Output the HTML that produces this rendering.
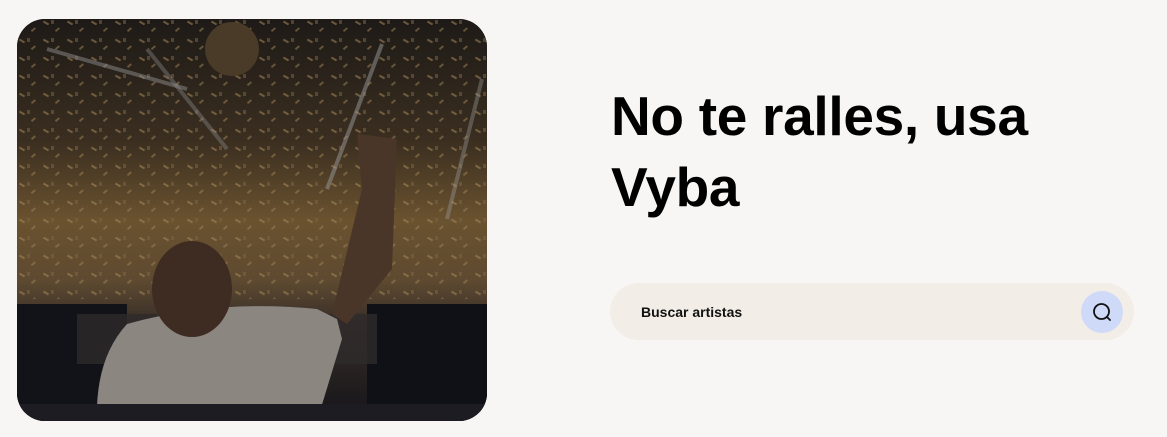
<!DOCTYPE html>
<html><head><meta charset="utf-8"><style>
body{margin:0;width:1167px;height:437px;background:#f7f6f4;position:relative;overflow:hidden;font-family:"Liberation Sans",sans-serif}
.img{position:absolute;left:17px;top:19px;width:470px;height:402px;border-radius:28px;overflow:hidden;background:#1b1713}
h1{position:absolute;left:611px;top:81px;margin:0;font-size:55px;line-height:71px;font-weight:700;color:#000;letter-spacing:-0.3px}
.bar{position:absolute;left:610px;top:283px;width:524px;height:57px;border-radius:29px;background:#f2ede6}
.bar span{position:absolute;left:31px;top:21px;font-size:14px;font-weight:700;color:#111}
.btn{position:absolute;left:471px;top:8px;width:42px;height:42px;border-radius:50%;background:#cfdaf9}
</style></head><body>
<div class="img">
<svg width="470" height="402" viewBox="0 0 470 402">
<defs>
<linearGradient id="v" x1="0" y1="0" x2="0" y2="1">
<stop offset="0" stop-color="#1e1a17"/><stop offset="0.3" stop-color="#3a2e20"/><stop offset="0.5" stop-color="#6a522f"/><stop offset="0.65" stop-color="#5e4a30"/><stop offset="0.75" stop-color="#3a3029"/><stop offset="1" stop-color="#141419"/>
</linearGradient>
<pattern id="c" width="24" height="18" patternUnits="userSpaceOnUse">
<rect x="2" y="3" width="6" height="2" fill="#a88a5a" transform="rotate(30 5 4)"/>
<rect x="14" y="10" width="5" height="2" fill="#9a7f55" transform="rotate(-40 16 11)"/>
<rect x="10" y="1" width="3" height="4" fill="#7a6444"/>
</pattern>
</defs>
<rect width="470" height="402" fill="url(#v)"/>
<rect y="0" width="470" height="280" fill="url(#c)" opacity="0.55"/>
<circle cx="215" cy="30" r="27" fill="#4a3a28"/>
<line x1="30" y1="30" x2="170" y2="70" stroke="#8d8c8c" stroke-width="4" opacity="0.5"/>
<line x1="130" y1="30" x2="210" y2="130" stroke="#8d8c8c" stroke-width="4" opacity="0.4"/>
<line x1="365" y1="25" x2="310" y2="170" stroke="#9a9a9a" stroke-width="4" opacity="0.5"/>
<line x1="465" y1="60" x2="430" y2="200" stroke="#9a9a9a" stroke-width="4" opacity="0.4"/>
<rect x="0" y="285" width="110" height="117" fill="#121318"/>
<rect x="350" y="285" width="120" height="117" fill="#101116"/>
<rect x="60" y="295" width="300" height="50" fill="#2e2b2b" opacity="0.8"/>
<path d="M110 305 Q200 280 300 290 L320 300 L325 320 L300 402 L80 402 Q78 340 110 305Z" fill="#8b8680"/>
<path d="M340 115 L380 120 L375 250 L330 305 L315 295 L345 170Z" fill="#4a3628"/>
<ellipse cx="175" cy="270" rx="40" ry="48" fill="#3e2c22"/>
<rect x="0" y="385" width="470" height="17" fill="#1c1c22"/>
</svg>
</div>
<h1>No te ralles, usa<br>Vyba</h1>
<div class="bar"><span>Buscar artistas</span>
<div class="btn"><svg width="42" height="42" viewBox="0 0 42 42"><circle cx="20.5" cy="20.5" r="7.5" fill="none" stroke="#111" stroke-width="1.8"/><line x1="26" y1="26" x2="29" y2="29" stroke="#111" stroke-width="1.8" stroke-linecap="round"/></svg></div>
</div>
</body></html>
